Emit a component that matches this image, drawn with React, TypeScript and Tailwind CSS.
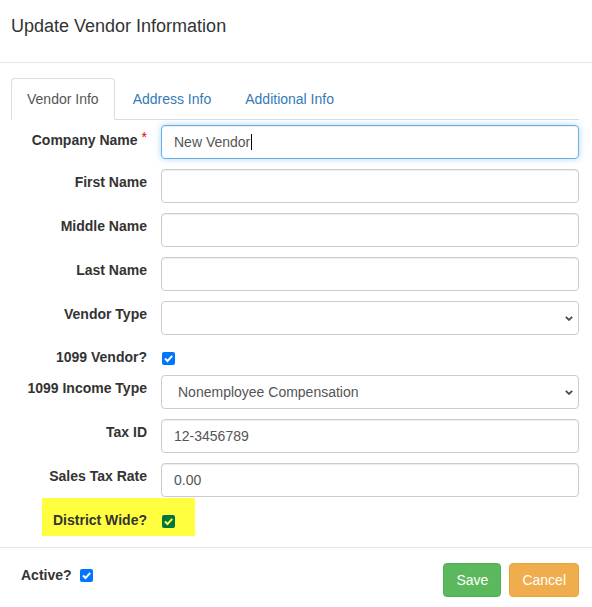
import React from 'react'

// Small checked checkbox, drawn so the highlighted one can share the shape
const Checked = ({ box, mark }: { box: string; mark: string }) => (
  <span className={`inline-flex h-[13px] w-[13px] shrink-0 items-center justify-center rounded-[2px] ${box}`}>
    <svg viewBox="0 0 13 13" className="h-[13px] w-[13px]">
      <path d="M3 6.6 L5.5 9.1 L10.2 3.9" fill="none" stroke={mark} strokeWidth="2.1" />
    </svg>
  </span>
)

const Label = ({ children, className = '' }: { children: React.ReactNode; className?: string }) => (
  <label className={`w-[136px] shrink-0 text-right text-[14px] font-bold leading-[20px] text-[#333] ${className}`}>
    {children}
  </label>
)

const TextInput = ({ value = '' }: { value?: string }) => (
  <div className="flex h-[34px] flex-1 items-center rounded-[4px] border border-[#ccc] px-[12px] text-[14px] text-[#555] shadow-[inset_0_1px_1px_rgba(0,0,0,0.075)]">
    {value}
  </div>
)

const SelectBox = ({ value = '' }: { value?: string }) => (
  <div className="relative flex h-[34px] flex-1 items-center rounded-[4px] border border-[#ccc] pl-[16px] text-[14px] text-[#555]">
    {value}
    <svg viewBox="0 0 8 5" className="absolute right-[5px] top-[14px] h-[5px] w-[8px]">
      <path d="M0.8 0.8 L4 3.9 L7.2 0.8" fill="none" stroke="#4a4a4a" strokeWidth="1.8" />
    </svg>
  </div>
)

const Row = ({ label, children }: { label: string; children: React.ReactNode }) => (
  <div className="flex items-start gap-[14px]">
    <Label className="pt-[3px]">{label}</Label>
    {children}
  </div>
)

export default function App() {
  return (
    <div className="min-h-screen w-full bg-white font-['Liberation_Sans',Arial,sans-serif] text-[#333]">
      {/* header */}
      <div className="h-[63px] border-b border-[#e5e5e5] px-[11px] pt-[14px]">
        <h4 className="text-[18px] leading-[25.7px] text-[#333]">Update Vendor Information</h4>
      </div>

      <div className="pl-[11px] pr-[13px] pt-[15px]">
        {/* tabs */}
        <ul className="flex border-b border-[#ddd] text-[14px] leading-[20px]">
          <li className="-mb-px mr-[2px]">
            <span className="block rounded-t-[4px] border border-[#ddd] border-b-transparent bg-white px-[15px] py-[10px] text-[#555]">
              Vendor Info
            </span>
          </li>
          <li className="-mb-px mr-[2px]">
            <span className="block border border-transparent px-[15px] py-[10px] text-[#337ab7]">Address Info</span>
          </li>
          <li className="-mb-px">
            <span className="block border border-transparent px-[15px] py-[10px] text-[#337ab7]">Additional Info</span>
          </li>
        </ul>

        {/* form */}
        <div className="mt-[5px] flex flex-col gap-[10px]">
          <div className="flex items-start gap-[14px]">
            <Label className="pt-[5px]">
              Company Name<span className="relative -top-[3px] ml-[4px] font-normal text-[#e00]">*</span>
            </Label>
            <div className="flex h-[34px] flex-1 items-center rounded-[4px] border border-[#66afe9] px-[12px] text-[14px] text-[#555] shadow-[inset_0_1px_1px_rgba(0,0,0,0.075),0_0_6px_rgba(102,175,233,0.5)]">
              New Vendor
              <span className="ml-px h-[16px] w-px bg-black" />
            </div>
          </div>
          <Row label="First Name"><TextInput /></Row>
          <Row label="Middle Name"><TextInput /></Row>
          <Row label="Last Name"><TextInput /></Row>
          <Row label="Vendor Type"><SelectBox /></Row>

          <div className="flex h-[20px] items-start gap-[14px]">
            <Label className="pt-[2px]">1099 Vendor?</Label>
            <span className="ml-[1px] mt-[3px]">
              <Checked box="bg-[#0075ff]" mark="#ffffff" />
            </span>
          </div>

          <Row label="1099 Income Type"><SelectBox value="Nonemployee Compensation" /></Row>
          <Row label="Tax ID"><TextInput value="12-3456789" /></Row>
          <Row label="Sales Tax Rate"><TextInput value="0.00" /></Row>
        </div>

        {/* highlighted row */}
        <div className="ml-[31px] mt-[1px] flex h-[38px] w-[153px] items-start gap-[15px] bg-[#ffff40] pt-[12px]">
          <label className="w-[105px] shrink-0 text-right text-[14px] font-bold leading-[20px] text-[#333]">
            District Wide?
          </label>
          <span className="mt-[1px]">
            <Checked box="bg-[#00753f]" mark="#ffff40" />
          </span>
        </div>
      </div>

      {/* footer */}
      <div className="mt-[11px] flex h-[60px] items-start justify-between border-t border-[#e5e5e5] pl-[21px] pr-[13px] pt-[15px]">
        <div className="flex items-center gap-[8px] pt-[2px]">
          <span className="text-[14px] font-bold leading-[20px] text-[#333]">Active?</span>
          <Checked box="bg-[#0075ff]" mark="#ffffff" />
        </div>
        <div className="flex gap-[8px]">
          <button className="h-[34px] rounded-[4px] border border-[#4cae4c] bg-[#5cb85c] px-[12px] text-[14px] leading-[20px] text-white">
            Save
          </button>
          <button className="h-[34px] rounded-[4px] border border-[#eea236] bg-[#f0ad4e] px-[12px] text-[14px] leading-[20px] text-white">
            Cancel
          </button>
        </div>
      </div>
    </div>
  )
}
